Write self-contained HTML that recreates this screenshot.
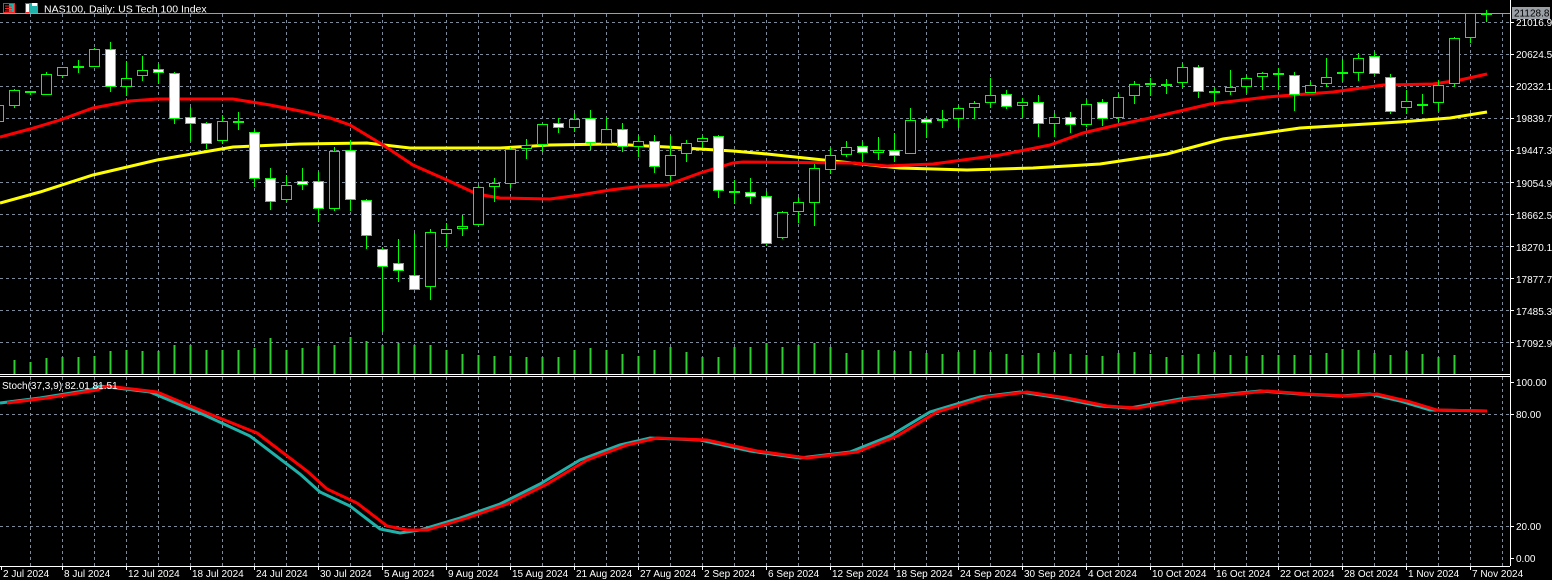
<!DOCTYPE html>
<html><head><meta charset="utf-8"><style>
html,body{margin:0;padding:0;background:#000;overflow:hidden}
svg{display:block}
text{font-family:"Liberation Sans",sans-serif;font-size:10px;fill:#fff}
</style></head><body>
<svg id="s" width="1552" height="580" xmlns="http://www.w3.org/2000/svg">
<rect width="1552" height="580" fill="#000"/>
<g id="grid" stroke="#7d8a99" stroke-width="1" stroke-dasharray="3,3"></g>
<line x1="0" y1="13.5" x2="1510" y2="13.5" stroke="#9aa0a6" stroke-width="1"/>
<g id="vol" stroke="#32cd32" stroke-width="2"></g>
<polyline id="yel" fill="none" stroke="#ffff00" stroke-width="3"/>
<polyline id="red" fill="none" stroke="#ff0000" stroke-width="3"/>
<g id="cdl"></g>
<polyline id="stc" fill="none" stroke="#20b2aa" stroke-width="3"/>
<polyline id="sts" fill="none" stroke="#ff0000" stroke-width="3"/>
<rect x="0" y="374" width="1510" height="3" fill="#000"/>
<line x1="0" y1="374.5" x2="1510" y2="374.5" stroke="#fff"/>
<line x1="0" y1="376.5" x2="1510" y2="376.5" stroke="#fff"/>
<line x1="1510.5" y1="0" x2="1510.5" y2="566" stroke="#fff"/>
<line x1="0" y1="566.5" x2="1510" y2="566.5" stroke="#fff"/>
<rect x="1511" y="0" width="41" height="580" fill="#000"/>
<line x1="1510.5" y1="0" x2="1510.5" y2="566" stroke="#fff"/>
<g id="ticks" stroke="#fff"></g>
<rect x="1512" y="7" width="38" height="12" fill="#9aa0a6"/>
<text x="1514" y="16.5" style="fill:#000">21128.8</text>
<text x="1516" y="26">21016.9</text>
<text x="1516" y="58">20624.5</text>
<text x="1516" y="90">20232.1</text>
<text x="1516" y="122">19839.7</text>
<text x="1516" y="154">19447.3</text>
<text x="1516" y="187">19054.9</text>
<text x="1516" y="219">18662.5</text>
<text x="1516" y="251">18270.1</text>
<text x="1516" y="283">17877.7</text>
<text x="1516" y="315">17485.3</text>
<text x="1516" y="347">17092.9</text>
<text x="1516" y="386">100.00</text>
<text x="1516" y="418">80.00</text>
<text x="1516" y="530">20.00</text>
<text x="1516" y="562">0.00</text>
<g id="dates"></g>
<rect x="0" y="0" width="200" height="12" fill="#000"/>
<rect x="3.5" y="3.5" width="11" height="9" fill="none" stroke="#ff2020"/>
<rect x="9" y="4" width="5" height="8" fill="#20b2aa"/>
<line x1="5" y1="6" x2="12" y2="6" stroke="#ff2020"/><line x1="5" y1="8.5" x2="12" y2="8.5" stroke="#ff2020"/><line x1="5" y1="11" x2="12" y2="11" stroke="#ff2020"/>
<rect x="25.5" y="3.5" width="6" height="9" fill="#fff" stroke="#ff2020"/>
<rect x="29" y="3" width="9" height="10" fill="#20b2aa"/>
<rect x="32" y="3" width="5" height="3" fill="#fff"/>
<text x="44" y="12.5" style="font-size:10.5px">NAS100, Daily:  US Tech 100 Index</text>
<text x="2" y="389">Stoch(37,3,9) 82.01 81.51</text>
</svg>
<script>
const NS="http://www.w3.org/2000/svg";
function el(p,t,a){const e=document.createElementNS(NS,t);for(const k in a)e.setAttribute(k,a[k]);document.getElementById(p).appendChild(e);return e;}
// grid
[22,54,86,118,150,182,214,246,278,310,342].forEach(y=>el('grid','line',{x1:0,y1:y+.5,x2:1510,y2:y+.5}));
[414,526].forEach(y=>el('grid','line',{x1:0,y1:y+.5,x2:1510,y2:y+.5}));
for(let x=30;x<1510;x+=32){el('grid','line',{x1:x+.5,y1:14,x2:x+.5,y2:374});el('grid','line',{x1:x+.5,y1:377,x2:x+.5,y2:566});}
[22,54,86,118,150,182,214,246,278,310,342,382,414,526,558].forEach(y=>el('ticks','line',{x1:1510,y1:y+.5,x2:1514,y2:y+.5}));
// candles: [k, bodyTop, bodyBot, hi, lo, type] type 1=bull hollow,0=bear white,2=cross
const C=[[-1,105,122,100,125,1],[0,90,106,89,108,1],[1,91,93,91,95,0],[2,74,95,72,95,1],[3,67,76,67,78,1],[4,67,67,60,73,2],[5,49,67,48,67,1],[6,49,87,42,92,0],[7,78,87,61,96,1],[8,70,76,56,81,1],[9,69,73,64,84,0],[10,73,119,72,124,0],[11,117,124,107,141,0],[12,123,144,122,149,0],[13,121,141,115,144,1],[14,122,122,112,130,2],[15,132,179,130,187,0],[16,178,202,168,210,0],[17,185,200,175,201,1],[18,181,185,168,190,0],[19,181,209,172,222,0],[20,151,209,147,211,1],[21,150,200,140,211,0],[22,200,236,199,249,0],[23,249,267,247,332,0],[24,263,271,239,282,0],[25,275,290,233,290,0],[26,232,287,229,300,1],[27,229,234,223,247,1],[28,226,229,215,236,1],[29,187,225,185,225,1],[30,183,187,178,202,1],[31,149,184,147,188,1],[32,145,149,139,159,1],[33,124,145,124,152,1],[34,123,128,118,133,0],[35,119,128,113,132,1],[36,118,143,110,150,0],[37,129,144,118,144,1],[38,129,147,123,152,0],[39,141,147,135,157,1],[40,141,167,135,173,0],[41,155,176,135,182,1],[42,143,154,140,162,1],[43,138,142,136,147,1],[44,136,191,135,198,0],[45,191,193,180,204,0],[46,192,197,178,204,0],[47,196,244,191,246,0],[48,212,238,211,239,1],[49,202,212,197,223,1],[50,168,203,164,226,1],[51,155,170,148,174,1],[52,147,155,141,157,1],[53,146,153,142,162,0],[54,150,153,137,160,1],[55,150,156,133,162,0],[56,120,154,108,154,1],[57,119,123,118,138,0],[58,119,121,110,128,1],[59,108,119,106,128,1],[60,103,108,101,119,1],[61,95,103,78,108,1],[62,94,107,90,109,0],[63,102,106,98,118,1],[64,102,124,95,137,0],[65,117,124,113,137,1],[66,117,125,112,133,0],[67,104,125,100,127,1],[68,102,119,99,126,0],[69,97,118,93,122,1],[70,84,96,81,104,1],[71,84,84,78,96,2],[72,84,86,79,94,0],[73,67,83,63,87,1],[74,67,92,65,98,0],[75,92,92,87,102,2],[76,87,92,70,95,1],[77,78,87,75,93,1],[78,73,77,72,90,1],[79,74,74,68,90,2],[80,75,95,72,111,0],[81,85,93,82,93,1],[82,77,84,58,87,1],[83,72,74,59,82,0],[84,58,73,53,81,1],[85,56,74,52,75,0],[86,77,112,74,114,0],[87,101,108,90,114,1],[88,105,105,94,114,2],[89,85,103,80,111,1],[90,38,84,37,87,1],[91,13,38,13,43,1],[92,14,14,10,22,2]];
C.forEach(([k,t,b,h,l,ty])=>{const c=14+16*k;
 el('cdl','line',{x1:c+.5,y1:h,x2:c+.5,y2:l,stroke:'#00ff00','stroke-width':1});
 if(ty==2){el('cdl','rect',{x:c-5,y:t-1,width:11,height:2,fill:'#00ff00'});}
 else{const hh=Math.max(b-t,2);el('cdl','rect',{x:c-4.5,y:t+.5,width:10,height:hh-1,fill:ty?'#000':'#fff',stroke:'#00ff00','stroke-width':1});}
});
// volume
const V=[360,360,362,358,357,357,356,351,350,351,351,345,345,350,350,350,348,338,350,348,346,345,337,341,345,343,345,345,350,354,355,356,356,357,357,357,350,348,350,354,356,350,347,352,357,357,347,347,343,347,345,343,347,353,350,350,351,351,353,354,352,350,352,354,355,353,352,354,355,356,353,352,354,357,355,354,352,355,356,355,355,355,355,353,349,350,353,355,351,354,357,355];
V.forEach((v,i)=>{const k=i-1;const c=14+16*k+.5;el('vol','line',{x1:c,y1:374,x2:c,y2:v});});
function pl(id,pts){document.getElementById(id).setAttribute('points',pts.map(p=>p.join(',')).join(' '));}
pl('red',[[0,137],[30,129],[60,120],[93,108],[130,101],[157,99],[233,99],[270,105],[300,111],[330,118],[350,125],[383,145],[413,165],[447,180],[477,194],[500,198],[550,199],[580,195],[610,190],[643,186],[667,185],[700,173],[733,163],[743,162],[853,163],[887,166],[933,164],[1000,155],[1050,145],[1083,133],[1117,125],[1150,118],[1210,104],[1267,97],[1333,92],[1383,85],[1433,84],[1460,80],[1487,74]]);
pl('yel',[[0,203],[40,192],[93,175],[157,160],[233,147],[300,144],[367,143],[410,148],[500,148],[550,145],[610,144],[667,147],[733,151],[767,154],[833,161],[900,168],[967,170],[1033,168],[1100,164],[1167,154],[1223,139],[1300,128],[1400,122],[1450,118],[1487,112]]);
const S=[[0,403],[40,398],[90,390],[100,386],[150,392],[200,413],[250,436],[300,474],[320,492],[350,506],[380,529],[400,533],[420,530],[460,518],[500,504],[540,484],[580,460],[620,445],[650,438],[700,440],[750,451],[800,458],[850,452],[890,436],[930,412],[980,397],[1020,392],[1060,398],[1100,406],[1130,408],[1180,399],[1220,395],[1260,391],[1300,394],[1340,396],[1370,394],[1400,401],[1430,410],[1487,411]];
pl('stc',S);
pl('sts',S.map(([x,y],i)=>[x+7,i<3?y:y+(i>5&&i<12?-3:0)]).map(([x,y])=>[Math.min(x,1487),y]));
const D=["2 Jul 2024","8 Jul 2024","12 Jul 2024","18 Jul 2024","24 Jul 2024","30 Jul 2024","5 Aug 2024","9 Aug 2024","15 Aug 2024","21 Aug 2024","27 Aug 2024","2 Sep 2024","6 Sep 2024","12 Sep 2024","18 Sep 2024","24 Sep 2024","30 Sep 2024","4 Oct 2024","10 Oct 2024","16 Oct 2024","22 Oct 2024","28 Oct 2024","1 Nov 2024","7 Nov 2024"];
D.forEach((d,i)=>{const x=i==0?1:-2+64*i;const t=el('dates','text',{x:x+2,y:577});t.textContent=d;el('dates','line',{x1:x+.5,y1:566,x2:x+.5,y2:570,stroke:'#fff'});});
</script>
</body></html>
